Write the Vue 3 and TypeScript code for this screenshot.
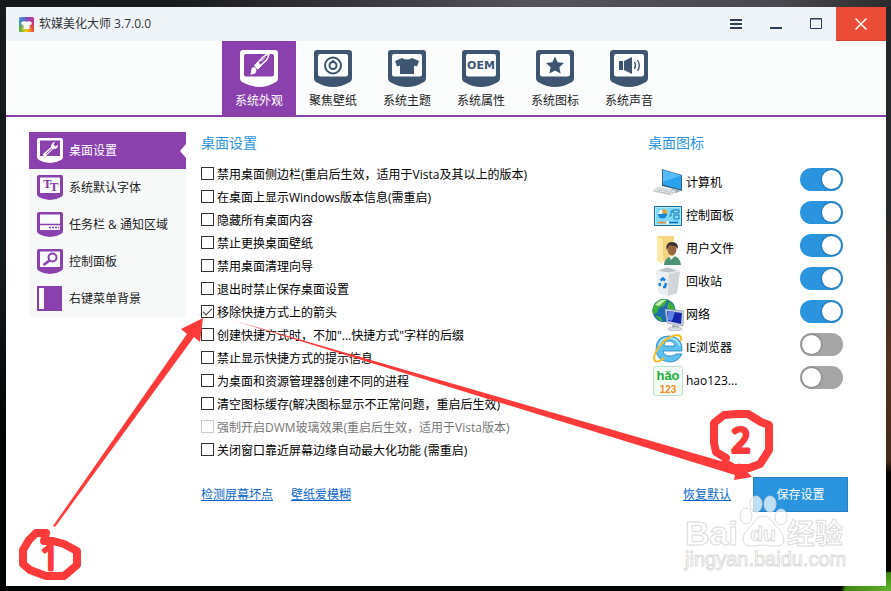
<script setup lang="ts">
import { ref, reactive } from 'vue'

interface Option { label: string; checked: boolean; disabled?: boolean }
interface DesktopIcon { id: string; label: string; on: boolean }

const tabs = [
  { id: 'look', label: '系统外观' },
  { id: 'wallpaper', label: '聚焦壁纸' },
  { id: 'theme', label: '系统主题' },
  { id: 'oem', label: '系统属性' },
  { id: 'icons', label: '系统图标' },
  { id: 'sound', label: '系统声音' },
]
const activeTab = ref('look')

const sections = [
  { id: 'desktop', label: '桌面设置' },
  { id: 'font', label: '系统默认字体' },
  { id: 'taskbar', label: '任务栏 & 通知区域' },
  { id: 'panel', label: '控制面板' },
  { id: 'menu', label: '右键菜单背景' },
]
const activeSection = ref('desktop')

const options = reactive<Option[]>([
  { label: '禁用桌面侧边栏(重启后生效，适用于Vista及其以上的版本)', checked: false },
  { label: '在桌面上显示Windows版本信息(需重启)', checked: false },
  { label: '隐藏所有桌面内容', checked: false },
  { label: '禁止更换桌面壁纸', checked: false },
  { label: '禁用桌面清理向导', checked: false },
  { label: '退出时禁止保存桌面设置', checked: false },
  { label: '移除快捷方式上的箭头', checked: true },
  { label: '创建快捷方式时，不加"...快捷方式"字样的后缀', checked: false },
  { label: '禁止显示快捷方式的提示信息', checked: false },
  { label: '为桌面和资源管理器创建不同的进程', checked: false },
  { label: '清空图标缓存(解决图标显示不正常问题，重启后生效)', checked: false },
  { label: '强制开启DWM玻璃效果(重启后生效，适用于Vista版本)', checked: false, disabled: true },
  { label: '关闭窗口靠近屏幕边缘自动最大化功能 (需重启)', checked: false },
])

const desktopIcons = reactive<DesktopIcon[]>([
  { id: 'computer', label: '计算机', on: true },
  { id: 'control', label: '控制面板', on: true },
  { id: 'user', label: '用户文件', on: true },
  { id: 'bin', label: '回收站', on: true },
  { id: 'network', label: '网络', on: true },
  { id: 'ie', label: 'IE浏览器', on: false },
  { id: 'hao', label: 'hao123...', on: false },
])
</script>

<template>
  <div class="desktop">
    <div class="window">
      <header class="titlebar">
        <svg class="logo" viewBox="0 0 15 15" aria-hidden="true">
          <defs>
            <linearGradient id="lg-a" x1="0" y1="0" x2="1" y2="0">
              <stop offset="0" stop-color="#2f9bd8" /><stop offset=".5" stop-color="#7b52b5" /><stop offset="1" stop-color="#c8328f" />
            </linearGradient>
            <linearGradient id="lg-b" x1="0" y1="0" x2="1" y2="0">
              <stop offset="0" stop-color="#4caf3d" /><stop offset=".5" stop-color="#f2d21c" /><stop offset="1" stop-color="#e8392b" />
            </linearGradient>
            <linearGradient id="lg-f" x1="0" y1="0" x2="0" y2="1">
              <stop offset=".3" stop-color="#fff" stop-opacity="0" /><stop offset=".8" stop-color="#fff" />
            </linearGradient>
            <mask id="lg-m"><rect width="15" height="15" fill="url(#lg-f)" /></mask>
          </defs>
          <rect width="15" height="15" rx="1.500" fill="url(#lg-a)" />
          <rect width="15" height="15" rx="1.500" fill="url(#lg-b)" mask="url(#lg-m)" />
          <path d="M5 4q2.500 1.500 5 0l3 1.500-1 2.500-1.500-.5V12h-6V7.500L3 8 2 5.500z" fill="#fff" />
        </svg>
        <h1 class="title">软媒美化大师 3.7.0.0</h1>
        <div class="controls">
          <button type="button" aria-label="菜单">
            <svg viewBox="0 0 12 12"><path d="M0 2h12M0 6h12M0 10h12" stroke="#2b3c53" stroke-width="2" /></svg>
          </button>
          <button type="button" aria-label="最小化">
            <svg viewBox="0 0 12 12"><path d="M0 10h12" stroke="#2b3c53" stroke-width="2" /></svg>
          </button>
          <button type="button" aria-label="最大化">
            <svg viewBox="0 0 12 12"><path d="M.5.5h11v10H.5zM0 1h12" fill="none" stroke="#2b3c53" /></svg>
          </button>
          <button type="button" class="close" aria-label="关闭">
            <svg viewBox="0 0 12 12"><path d="M.5.5l11 11M11.500.5l-11 11" stroke="#fff" stroke-width="1.500" /></svg>
          </button>
        </div>
      </header>

      <nav class="tabs">
        <button
          v-for="tab in tabs" :key="tab.id" type="button" class="tab"
          :class="{ active: activeTab === tab.id }" @click="activeTab = tab.id"
        >
          <svg class="tab-icon" viewBox="0 0 38 37" aria-hidden="true">
            <path fill="currentColor" fill-rule="evenodd" d="M3 0h32q3 0 3 3v25q0 3-3 4.500Q27 37 19 37T3 32.500Q0 31 0 28V3q0-3 3-3zM6 4q-2 0-2 2v18.500q0 2 2 2h26q2 0 2-2V6q0-2-2-2z" />
            <g v-if="tab.id === 'look'">
              <path d="M17.500 18.500l-2.500-3L23 7q3-2.500 6-3-.5 3.500-2.500 6z" fill="none" stroke="currentColor" stroke-width="1.500" />
              <path d="M15 16l3 3 3-3.500-3-3zM21 11.500l4-4" fill="currentColor" stroke="currentColor" />
              <path d="M13 17q3 0 3.500 3.500Q16 25 10 24.500q1.500-1.500 1-4 .2-2.500 2-3.500z" fill="currentColor" />
            </g>
            <g v-else-if="tab.id === 'wallpaper'">
              <circle cx="19" cy="15.500" r="8" fill="none" stroke="currentColor" stroke-width="2" />
              <circle cx="19" cy="15.500" r="3.500" fill="none" stroke="currentColor" stroke-width="2" />
              <path d="M19 9.500l3 3.500h-6z" fill="currentColor" />
            </g>
            <path v-else-if="tab.id === 'theme'" fill="currentColor" d="M14 8q5 3 10 0l7 3-2 5.500-3-1V24H12v-8.500l-3 1L7 11z" />
            <text v-else-if="tab.id === 'oem'" x="19" y="19" text-anchor="middle" class="oem-text">OEM</text>
            <path v-else-if="tab.id === 'icons'" fill="currentColor" d="M19 6.500l2.700 5.700 6.300.8-4.600 4.300 1.200 6.200-5.600-3-5.600 3 1.200-6.200L10 13l6.300-.8z" />
            <g v-else>
              <path d="M9 11h4v9H9zM14 11l8-4v17l-8-4z" fill="currentColor" />
              <path d="M24.500 12q2 3.500 0 7M27.500 10q3.500 5.500 0 11" fill="none" stroke="currentColor" stroke-width="1.300" />
            </g>
          </svg>
          <span>{{ tab.label }}</span>
        </button>
      </nav>

      <div class="body">
        <aside class="sidebar">
          <button
            v-for="s in sections" :key="s.id" type="button" class="side-item"
            :class="{ active: activeSection === s.id }" @click="activeSection = s.id"
          >
            <svg class="side-icon" viewBox="0 0 26 25" aria-hidden="true">
              <template v-if="s.id === 'menu'">
                <path d="M0 0h25v25H0z" fill="#8a40ad" /><path d="M2 2h5v21H2z" fill="#f8fafb" />
              </template>
              <template v-else>
                <path d="M2 0h22q2 0 2 2v17q0 2-2 3-5 3-11 3T2 22q-2-1-2-3V2q0-2 2-2z" fill="currentColor" />
                <path d="M3 2.500h20V18H3z" class="screen" />
              </template>
              <path v-if="s.id === 'desktop'" d="M6 16l8-7q-.5-4 4.500-5.500L16.500 6.500l2 2 2.500-2q0 5-5 4.500L8.500 18.500Q6 18.500 6 16z" fill="currentColor" />
              <path v-if="s.id === 'desktop'" d="M9 16l6-5.500" stroke="#8a40ad" />
              <text v-if="s.id === 'font'" x="6" y="13" dx="0 -2" dy="0 3" class="tt-text">TT</text>
              <path v-if="s.id === 'taskbar'" d="M3 12.500h20M12 15.500h2m1 0h2m1 0h2m1 0h1" stroke="#8a40ad" stroke-width="1.300" />
              <g v-if="s.id === 'panel'" fill="none" stroke="#8a40ad">
                <circle cx="15.500" cy="8.500" r="4" stroke-width="2" /><path d="M12.500 11.500l-6 4.500" stroke-width="2.500" />
              </g>
            </svg>
            <span>{{ s.label }}</span>
          </button>
        </aside>

        <main class="main">
          <div class="columns">
            <section class="settings">
              <h2>桌面设置</h2>
              <label v-for="o in options" :key="o.label" class="option" :class="{ disabled: o.disabled }">
                <input v-model="o.checked" type="checkbox" class="box" :disabled="o.disabled">
                <span>{{ o.label }}</span>
              </label>
            </section>

            <section class="icons">
              <h2>桌面图标</h2>
              <div class="icon-list">
                <label v-for="d in desktopIcons" :key="d.id" class="icon-row">
                  <svg class="icon" viewBox="0 0 32 32" aria-hidden="true">
                    <g v-if="d.id === 'computer'">
                      <path d="M10 2l20 6v16l-20-5z" fill="#3a6585" /><path d="M11 3l18 5.500v14L11 17.500z" fill="#2aa3ee" /><path d="M11 3l18 5.500L11 15z" fill="#55bcf8" />
                      <path d="M20 22l6 1 3 1-5 2-6-2z" fill="#a4b0b8" /><path d="M1 24l5-4 18 4-5 4z" fill="#e3e6e8" stroke="#b3babf" stroke-width=".5" />
                      <path d="M3 24l15 3M5 22.500l16 3M6 25.500l4-4m1 5l4-4m0 5l5-4" stroke="#b0b8bd" stroke-width=".6" />
                    </g>
                    <g v-else-if="d.id === 'control'">
                      <path d="M2.500 6.500h27v19h-27z" fill="#80d8fb" stroke="#186b9d" /><path d="M3.500 7.500h25v17h-25z" fill="none" stroke="#b6ecff" />
                      <circle cx="10.500" cy="14" r="4.500" fill="#1388cf" /><path d="M10.500 14V9.500a4.500 4.500 0 0 0-4.500 4.500z" fill="#fff" /><path d="M11 13.500V9a4.500 4.500 0 0 1 4.500 4.500z" fill="#f6a21b" />
                      <path d="M17 16h2v-5h2M21 10h6v3h-6zM22 15h5v4h-5z" fill="none" stroke="#187cac" />
                      <path d="M6 22.500h9" stroke="#f08a18" stroke-width="1.500" /><path d="M17 22.500h9" stroke="#0871ae" stroke-width="1.500" /><circle cx="15.500" cy="22.500" r="1.500" fill="#fff" />
                    </g>
                    <g v-else-if="d.id === 'user'">
                      <path d="M5 3h17v25H5z" fill="#f4d680" /><path d="M5 3l6 4v24l-6-3z" fill="#ffe8a4" />
                      <path d="M12 32q0-7 8-9 8 0 9 9z" fill="#4a9272" /><path d="M17 23l2 4 4-4z" fill="#f0f0e8" />
                      <ellipse cx="20" cy="16.500" rx="4.500" ry="6" fill="#98663f" /><path d="M14.500 17q-1-8 5.500-8t6 7l-3-3q-4 0-5.500-1z" fill="#3a322d" />
                    </g>
                    <g v-else-if="d.id === 'bin'">
                      <path d="M4 5l11-4 13 4-3 22-9 3-9-3z" fill="#dce1e4" /><path d="M4 5l13 2-1 23-9-3z" fill="#eceff1" /><path d="M17 7l11-2-3 22-9 3z" fill="#cfd5d9" /><path d="M4 5l11-4 13 4-11 2z" fill="#bcc4c9" stroke="#f1f4f5" />
                      <path d="M8.500 14.500l2.500-2 2 2M14 17l-1 4h-2M8 20l-.5-3" fill="none" stroke="#1681da" stroke-width="2.500" />
                    </g>
                    <g v-else-if="d.id === 'network'">
                      <circle cx="12" cy="11.500" r="11.500" fill="#1e6bb4" /><path d="M3 5q6-7 13-4l-4 6-5 2-2 5-4 1Q-1 9 3 5zM17 2q5 3 6 8l-4 3-4-5zM3 16l6 2 2 5q-6-2-8-7z" fill="#3fae3d" /><path d="M3 6q5-6 11-5L7 7z" fill="#c4ecab" />
                      <path d="M13 10l19 2-1 15-16-3z" fill="#c9d2dd" stroke="#8290a1" stroke-width=".6" /><path d="M15 12l15 2-1 11-13-3z" fill="#1526ac" /><path d="M16 12l7 1-3 9-4-1z" fill="#5b82e5" />
                      <path d="M20 26l7 1v3l-7-1z" fill="#9ba5ae" /><ellipse cx="23" cy="30" rx="7" ry="2" fill="#d7dce1" stroke="#a0a8b0" stroke-width=".5" />
                    </g>
                    <g v-else-if="d.id === 'ie'">
                      <path fill-rule="evenodd" d="M4 17Q4 4 17 4q14 1 13 15H11q1 5 7 5 4 0 6-2h6q-4 8-12 8Q4 29 4 17zm8-3h11q-1-5-6-5t-5 5z" fill="#5cc1ee" stroke="#2583c2" stroke-width=".8" />
                      <path d="M7 13Q9 6 17 6q8 0 11 8" fill="none" stroke="#b5e9fb" stroke-width="1.500" />
                      <path d="M29 9q1-6-4-6Q15 4 7 15 0 25 3 29q3 2 9-3" fill="none" stroke="#f5bd1d" stroke-width="2" />
                    </g>
                    <g v-else>
                      <rect x="1.500" y="1.500" width="29" height="29" rx="2" fill="#f1fbf3" stroke="#bfe0ca" />
                      <text x="16" y="15" text-anchor="middle" class="hao">hǎo</text>
                      <text x="16" y="28" text-anchor="middle" class="num">123</text>
                    </g>
                  </svg>
                  <span class="icon-label">{{ d.label }}</span>
                  <input v-model="d.on" type="checkbox" role="switch" class="switch">
                </label>
              </div>
            </section>
          </div>

          <footer class="footer">
            <a href="#pixels">检测屏幕坏点</a>
            <a href="#blur">壁纸爱模糊</a>
            <a href="#reset" class="reset">恢复默认</a>
            <button type="button" class="save">保存设置</button>
          </footer>
        </main>
      </div>
    </div>

    <svg class="watermark" viewBox="0 0 170 84" aria-hidden="true">
      <g fill="#fff" fill-opacity=".7" stroke="#d2d2d2" stroke-opacity=".8">
        <ellipse cx="68" cy="23" rx="6" ry="8" /><ellipse cx="78" cy="11" rx="6" ry="8" />
        <ellipse cx="92" cy="11" rx="6" ry="8" /><ellipse cx="103" cy="24" rx="6" ry="8" />
        <path d="M85 23q7 0 12 9 9 7 9 16-1 6-11 5-10-2-20 0-10 1-10-7 1-8 9-14 5-9 11-9z" />
        <text x="7" y="52" class="wm-big">Bai</text>
        <text x="85" y="48" text-anchor="middle" class="wm-du">du</text>
        <text x="109" y="51" class="wm-cn">经验</text>
        <text x="7" y="73" class="wm-url">jingyan.baidu.com</text>
      </g>
    </svg>

    <svg class="marks" viewBox="0 0 891 591" aria-hidden="true">
      <g fill="#ff3a3a">
        <path d="M53 526L187 334l-6-5 22-11-3 24-6-5L55 527z" />
        <path d="M232 320L738 466l1-3 13 14-18 3 1-5z" />
      </g>
      <g fill="none" stroke="#ff3a3a" stroke-width="8" stroke-linecap="round" stroke-linejoin="round">
        <path d="M46 533H36l-7 7-6 10v14l7 6 16 6h18l13-11v-14l-13-7-11-3H44l2-8" />
        <path d="M726 458l-10-6-2-9v-20l10-8 13-1h11l13 8 8 3v25l-9 14-11 4h-15l-9-5" />
      </g>
      <text x="50" y="570" class="mark one" text-anchor="middle">1</text>
      <text x="741" y="452" class="mark two" text-anchor="middle">2</text>
    </svg>
  </div>
</template>

<style>
body { margin: 0; }
</style>

<style scoped>
.desktop {
  position: relative;
  box-sizing: border-box;
  min-height: 100vh;
  padding: 7px 5px 5px 6px;
  overflow: hidden;
  display: flex;
  background:
    radial-gradient(ellipse 66px 26px at 100% 100%, #62b52c 0, #3d8614 70%, transparent 76%),
    linear-gradient(to right, #14181a, #1a1b1e 20%, #55535b 60%, #47474c 88%, #2a2b2e) 0 0 / 100% 7px no-repeat,
    linear-gradient(#242628 0, #25272a 35%, #55321f 60%, #442a1a 78%, #060504 80%) 100% 0 / 5px 100% no-repeat,
    linear-gradient(#171b1e, #151a1c 45%, #020303 75%);
  font: 12px/16px "Open Sans", "Noto Sans CJK SC", sans-serif;
  color: #111;
}
.window { flex: 1; min-width: 0; background: #fff; }
button { font: inherit; border: 0; margin: 0; padding: 0; cursor: pointer; }
h1, h2 { margin: 0; font-weight: 400; }

.titlebar { display: flex; align-items: center; height: 34px; padding-left: 13px; background: #eff4f9; }
.logo { width: 15px; height: 15px; margin-right: 5px; }
.title { font-size: 12px; line-height: 16px; color: #333; }
.controls { display: flex; align-self: stretch; margin-left: auto; }
.controls button { display: flex; align-items: center; justify-content: center; width: 40px; background: transparent; }
.controls svg { width: 12px; height: 12px; }
.controls .close { width: 50px; background: #ea4c35; border-bottom: 1px solid #cf432f; }

.tabs {
  display: flex;
  justify-content: center;
  padding-right: 4px;
  background: #fbfdfd;
  border-bottom: 2px solid #8a40ad;
}
.tab {
  display: flex;
  flex-direction: column;
  align-items: center;
  gap: 6px;
  width: 74px;
  height: 74px;
  padding-top: 9px;
  background: transparent;
  color: #3d5570;
}
.tab span { color: #222; }
.tab.active { background: #8a40ad; color: #fff; }
.tab.active span { color: #fff; }
.tab-icon { width: 38px; height: 37px; }
.oem-text { font: 700 11px "DejaVu Sans", sans-serif; fill: currentColor; }

.body { display: flex; align-items: flex-start; gap: 15px; padding: 15px 38px 0 23px; }
.sidebar { flex: none; width: 157px; background: #f7f9f9; }
.side-item {
  position: relative;
  display: flex;
  align-items: center;
  gap: 6px;
  width: 100%;
  height: 37px;
  padding-left: 8px;
  background: transparent;
  color: #8a40ad;
  text-align: left;
}
.side-item span { color: #222; }
.side-item.active { background: #8a40ad; color: #fff; }
.side-item.active span { color: #fff; }
.side-item.active::after {
  content: "";
  position: absolute;
  right: 0;
  top: 12px;
  border: solid transparent;
  border-width: 7px 6px 7px 0;
  border-right-color: #fff;
}
.side-icon { width: 26px; height: 25px; }
.screen { fill: #f8fafb; }
.active .screen { fill: #8a40ad; }
.tt-text { font: 700 13px "Liberation Serif", serif; fill: #8a40ad; }

.main { flex: 1; min-width: 0; }
.columns { display: flex; justify-content: space-between; }
h2 { font-size: 14px; line-height: 22px; color: #2b94de; }
.settings h2 { margin-bottom: 8px; }
.option { display: flex; align-items: center; gap: 3px; height: 23px; color: #000; white-space: nowrap; }
.option span { padding-top: 2px; }
.option.disabled { color: #777; }
.box {
  appearance: none;
  box-sizing: border-box;
  flex: none;
  width: 13px;
  height: 13px;
  margin: 0;
  border: 1px solid #333;
  background: #fff;
  display: grid;
  place-items: center;
}
.box:disabled { border-color: #ccc; }
.box:checked::before {
  content: "";
  width: 8px;
  height: 4px;
  border: solid #333;
  border-width: 0 0 1px 1px;
  transform: translateY(-1px) rotate(-45deg);
}

.icons { flex: none; width: 200px; }
.icon-list { margin: 12px 5px 0 4px; }
.icon-row { display: flex; align-items: center; gap: 2px; height: 33px; color: #000; }
.icon { flex: none; width: 32px; height: 32px; }
.icon-label { flex: 1; }
.hao { font: 700 13px "Liberation Sans", sans-serif; fill: #22ac38; }
.num { font: 700 10px "Liberation Sans", sans-serif; fill: #f08a24; }
.switch {
  appearance: none;
  flex: none;
  box-sizing: border-box;
  width: 43px;
  height: 23px;
  margin: 0 0 6px;
  padding: 2px;
  border-radius: 12px;
  background: #a6a6a6;
  display: flex;
}
.switch::before {
  content: "";
  width: 19px;
  height: 19px;
  border-radius: 50%;
  background: #fff;
  box-shadow: 0 0 2px 1px rgba(0, 0, 0, .2);
}
.switch:checked { background: #2b94de; justify-content: flex-end; }

.footer { display: flex; align-items: center; gap: 18px; margin-top: 16px; }
.footer a { color: #0a66cc; text-decoration: underline; }
.reset { margin-left: auto; }
.save {
  width: 95px;
  height: 35px;
  margin-left: 4px;
  border: 1px solid #2381c4;
  background: #2b94de;
  color: #fff;
}

.watermark { position: absolute; right: 43px; bottom: 14px; width: 170px; height: 84px; pointer-events: none; }
.wm-big { font: 700 34px "Liberation Sans", sans-serif; }
.wm-du { font: 700 21px "Liberation Sans", sans-serif; }
.wm-cn { font: 700 28px "Noto Sans CJK SC", sans-serif; }
.wm-url { font: 400 20px "Liberation Sans", sans-serif; }

.marks { position: absolute; left: 0; top: 0; width: 891px; height: 591px; pointer-events: none; }
.mark { fill: #ff3a3a; stroke: #ff3a3a; stroke-linejoin: round; font-family: "Open Sans", sans-serif; font-weight: 400; }
.one { font-size: 34px; stroke-width: 3px; }
.two { font-size: 32px; stroke-width: 4px; }
</style>
